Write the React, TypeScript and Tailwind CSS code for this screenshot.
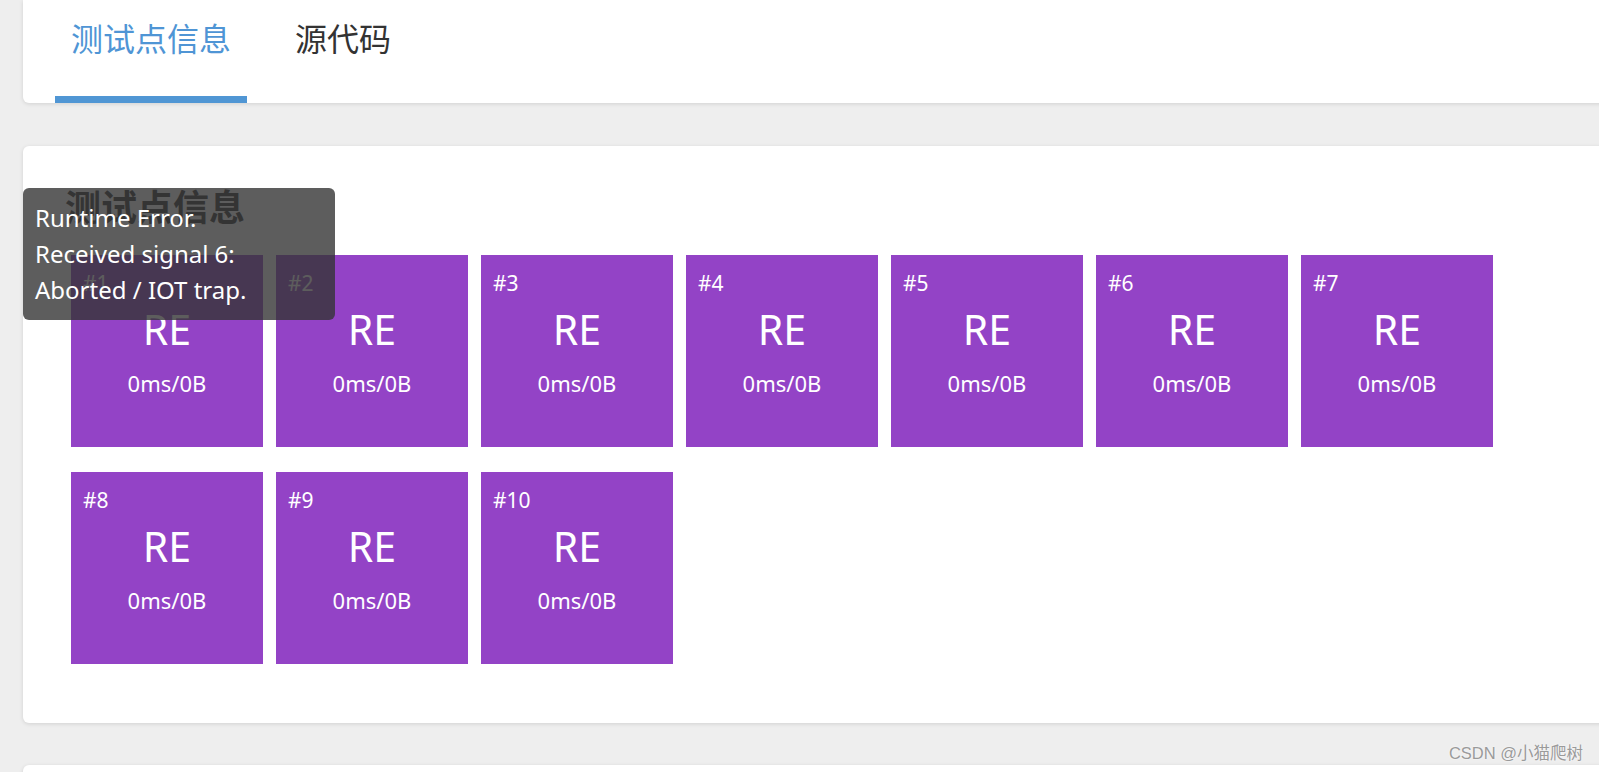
const font = { fontFamily: '"Noto Sans", "Noto Sans CJK SC", sans-serif' }

const cases = Array.from({ length: 10 }, (_, i) => ({ id: i + 1, status: 'RE', time: '0ms', mem: '0B' }))

function CaseBox({ id, status, time, mem }: { id: number; status: string; time: string; mem: string }) {
  return (
    <div className="w-[192px] h-[192px] bg-[#9343c6] text-white flex flex-col">
      <div className="px-[12px] mt-[16px] text-[21px] leading-[24px]">#{id}</div>
      <div className="mt-[12px] text-center text-[41px] leading-[44px]">{status}</div>
      <div className="mt-[19px] text-center text-[22px] leading-[26px]">
        {time}/{mem}
      </div>
    </div>
  )
}

export default function App() {
  return (
    <div className="relative w-[1599px] h-[772px] overflow-hidden bg-[#eeeeee]" style={font}>
      {/* tabs */}
      <div className="ml-[23px] w-[1620px] h-[103px] bg-white rounded-b-[6px] shadow-[0_1px_4px_rgba(0,0,0,0.12)] flex pl-[32px]">
        <div className="w-[192px] h-full flex flex-col">
          <div className="pt-[23px] text-center text-[32px] leading-[32px] text-[#4f95d5]">测试点信息</div>
          <div className="flex-1" />
          <div className="h-[7px] bg-[#5096d4]" />
        </div>
        <div className="w-[192px] h-full flex flex-col">
          <div className="pt-[23px] text-center text-[32px] leading-[32px] text-[#333333]">源代码</div>
        </div>
      </div>

      {/* test cases */}
      <div className="mt-[43px] ml-[23px] w-[1620px] bg-white rounded-[6px] shadow-[0_1px_4px_rgba(0,0,0,0.12)] pt-[44px] pb-[59px] pl-[42px]">
        <h2 className="text-[36px] leading-[36px] font-bold text-[#333333]">测试点信息</h2>
        <div className="mt-[29px] pl-[6px] w-[1440px] flex flex-wrap gap-x-[13px] gap-y-[25px]">
          {cases.map((c) => (
            <CaseBox key={c.id} {...c} />
          ))}
        </div>
      </div>

      <div className="mt-[42px] ml-[23px] w-[1620px] h-[60px] bg-white rounded-t-[6px] shadow-[0_1px_4px_rgba(0,0,0,0.12)]" />

      {/* tooltip */}
      <div className="absolute left-[23px] top-[188px] w-[312px] h-[132px] rounded-[6px] bg-[rgba(53,53,53,0.8)] text-white px-[12px] pt-[12px] text-[24px] leading-[36px]">
        <div>Runtime Error.</div>
        <div>Received signal 6:</div>
        <div>Aborted / IOT trap.</div>
      </div>

      {/* watermark */}
      <div
        className="absolute right-[16px] top-[743px] text-[16.5px] leading-[20px] text-[#9a9a9a] [text-shadow:0_0_2px_#ffffff]"
        style={{ fontFamily: '"Liberation Sans", "Noto Sans CJK SC", sans-serif' }}
      >
        CSDN @小猫爬树
      </div>
    </div>
  )
}
